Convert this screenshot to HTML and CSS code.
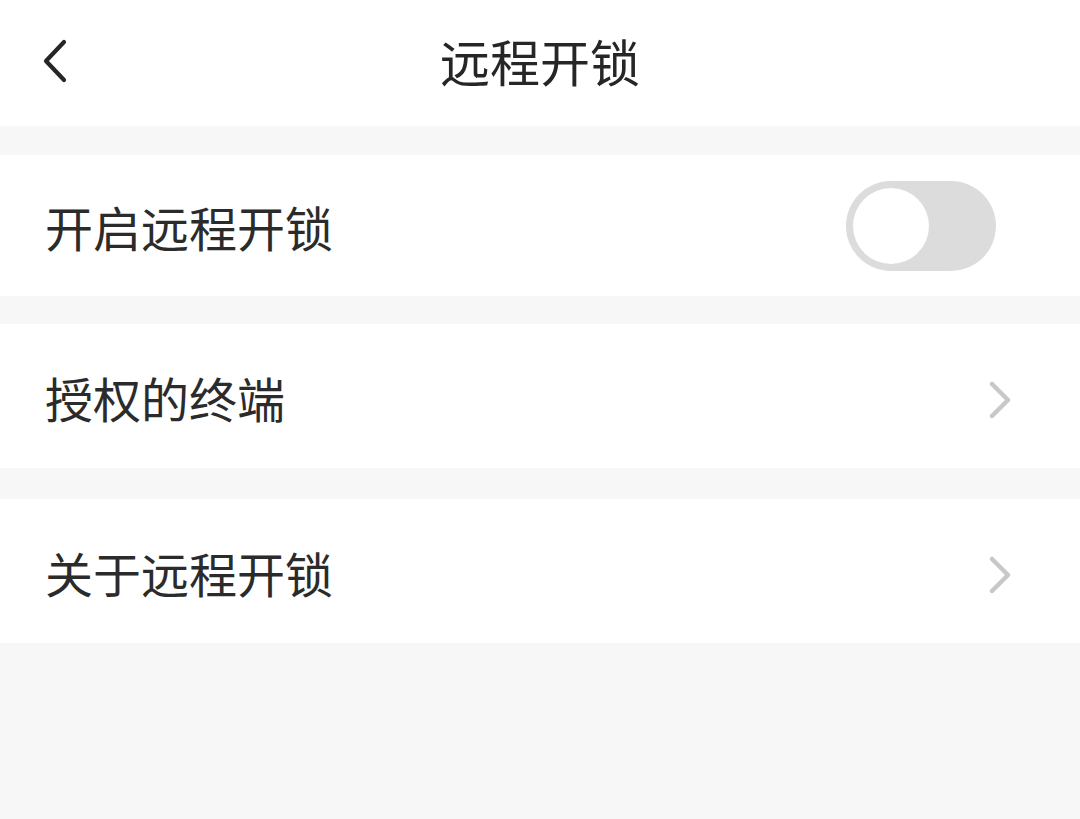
FILE: index.html
```html
<!DOCTYPE html>
<html lang="zh-CN">
<head>
<meta charset="utf-8">
<title>远程开锁</title>
<link rel="stylesheet" href="styles.css">
</head>
<body>
<header class="topbar">
  <div class="back">
    <svg width="28" height="44" viewBox="0 0 28 44" fill="none">
      <path d="M23 3 L5 22 L23 41" stroke="#262626" stroke-width="4.2" stroke-linecap="round" stroke-linejoin="round"/>
    </svg>
  </div>
  <h1 class="title">远程开锁</h1>
  <div></div>
</header>
<main class="list">
  <div class="row row-switch">
    <span class="label">开启远程开锁</span>
    <span class="switch"><span class="knob"></span></span>
  </div>
  <div class="row row-link gap-28">
    <span class="label">授权的终端</span>
    <svg class="chev" width="26" height="38" viewBox="0 0 26 38" fill="none">
      <path d="M4 3 L20 19 L4 35" stroke="#c8c8c8" stroke-width="4.5" stroke-linecap="round" stroke-linejoin="round"/>
    </svg>
  </div>
  <div class="row row-link gap-31">
    <span class="label">关于远程开锁</span>
    <svg class="chev" width="26" height="38" viewBox="0 0 26 38" fill="none">
      <path d="M4 3 L20 19 L4 35" stroke="#c8c8c8" stroke-width="4.5" stroke-linecap="round" stroke-linejoin="round"/>
    </svg>
  </div>
</main>
</body>
</html>
```
FILE: styles.css
```css
html, body {
  margin: 0;
  padding: 0;
}
body {
  background: #f7f7f7;
  font-family: "Noto Sans CJK SC", "Noto Sans", sans-serif;
  color: #2b2b2b;
  width: 1080px;
  min-height: 819px;
}
.topbar {
  height: 126px;
  background: #ffffff;
  display: grid;
  grid-template-columns: 1fr auto 1fr;
  align-items: center;
}
.back {
  padding-left: 41px;
  display: flex;
  align-items: center;
  padding-bottom: 4px;
}
.title {
  margin: 0;
  font-size: 50px;
  font-weight: 400;
  line-height: 1;
  color: #262626;
  padding-bottom: 6px;
}
.list {
  display: flex;
  flex-direction: column;
  padding-top: 29px;
}
.row {
  background: #ffffff;
  display: flex;
  align-items: center;
  justify-content: space-between;
  padding-left: 45px;
}
.row-switch {
  height: 141px;
  padding-right: 84px;
}
.row-link {
  height: 144px;
  padding-right: 66px;
}
.gap-28 { margin-top: 28px; }
.gap-31 { margin-top: 31px; }
.label {
  font-size: 48px;
  line-height: 1;
  color: #2b2b2b;
  padding-top: 1px;
}
.switch {
  width: 150px;
  height: 90px;
  border-radius: 45px;
  background: #dcdcdc;
  display: flex;
  align-items: center;
  padding-left: 7px;
  box-sizing: border-box;
}
.knob {
  width: 76px;
  height: 76px;
  border-radius: 50%;
  background: #ffffff;
}
.chev {
  margin-top: 8px;
}
```
